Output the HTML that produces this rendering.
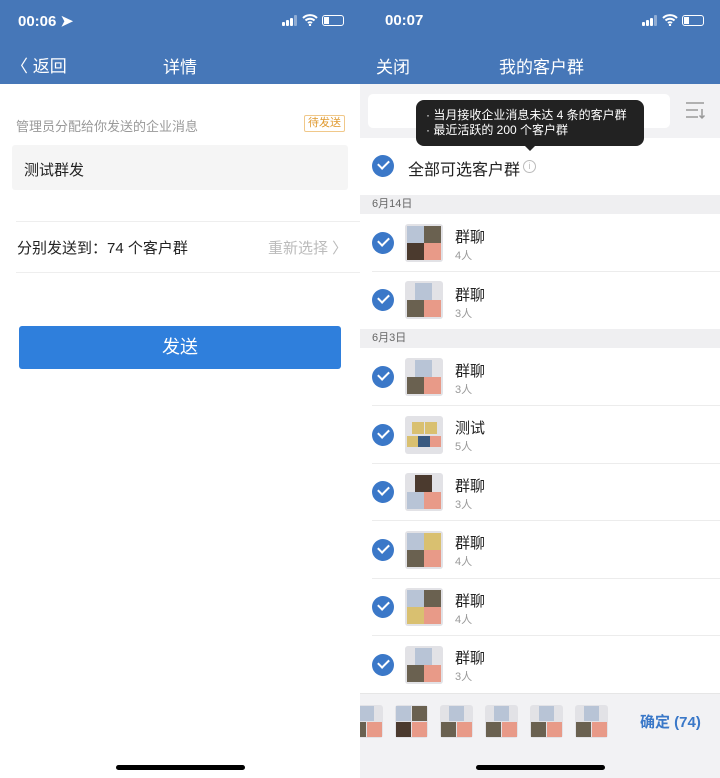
<!DOCTYPE html>
<html><head><meta charset="utf-8"><style>
*{margin:0;padding:0;box-sizing:border-box}
body{width:720px;height:778px;position:relative;overflow:hidden;background:#fff;font-family:"Liberation Sans","Noto Sans CJK SC",sans-serif}
.a{position:absolute}
.hdr{background:#4677b8;height:84px;top:0}
.st{color:#fff;font-size:15px;font-weight:bold;top:12px}
.nv{color:#fff;font-size:17px;top:53px}
.ck{position:absolute;width:22px;height:22px;border-radius:50%;background:#3b78c8;left:372px}
.ck::after{content:"";position:absolute;left:6px;top:5px;width:9px;height:5px;border-left:2px solid #fff;border-bottom:2px solid #fff;transform:rotate(-45deg)}
.av{position:absolute;left:405px;width:38px;height:38px;background:#e2e2e6;border-radius:3px}
.av i{position:absolute;width:17px;height:17px}
.nm{position:absolute;left:455px;font-size:15px;color:#222}
.ct{position:absolute;left:455px;font-size:11px;color:#999}
.ln{position:absolute;left:372px;right:0;height:1px;background:#ececec}
.sec{position:absolute;left:360px;width:360px;height:19px;background:#efeff1;font-size:11px;color:#666;padding-left:12px;line-height:19px}
.th{position:absolute;top:11px;width:33px;height:33px;background:#e2e2e6;border-radius:3px}
.th i{position:absolute;width:15px;height:15px}
.sky{background:#b8c4d6}.cat{background:#6a6150}.hor{background:#4b3a2e}.girl{background:#e89a88}.gold{background:#d9c070}.blue{background:#3a5a80}
.sig{position:absolute;top:15px;width:17px;height:11px}
.sig b{position:absolute;bottom:0;width:3px;background:#fff;border-radius:1px}
</style></head><body>
<!-- left -->
<div class="a hdr" style="left:0;width:360px"></div>
<div class="a st" style="left:18px">00:06 ➤</div>
<div class="sig" style="left:282px"><b style="left:0;height:4px"></b><b style="left:4px;height:6px"></b><b style="left:8px;height:8px"></b><b style="left:12px;height:11px;opacity:.4"></b></div>
<svg class="a" style="left:302px;top:14px" width="16" height="12" viewBox="0 0 16 12"><path d="M1 4a10 10 0 0 1 14 0M3.5 6.5a6.5 6.5 0 0 1 9 0M6 9a3 3 0 0 1 4 0" stroke="#fff" stroke-width="2" fill="none"/><circle cx="8" cy="11" r="1.2" fill="#fff"/></svg>
<div class="a" style="left:322px;top:15px;width:22px;height:11px;border:1px solid #fff;border-radius:3px"><div style="width:5px;height:7px;background:#fff;margin:1px"></div></div>
<div class="a nv" style="left:11px;top:52px">〈 返回</div>
<div class="a nv" style="left:163px">详情</div>
<div class="a" style="left:16px;top:116px;font-size:13px;color:#999">管理员分配给你发送的企业消息</div>
<div class="a" style="left:304px;top:115px;width:41px;height:17px;border:1px solid #f0c88a;border-radius:2px;color:#e09a30;font-size:11px;text-align:center;line-height:15px">待发送</div>
<div class="a" style="left:12px;top:145px;width:336px;height:45px;background:#f5f5f5;border-radius:3px;font-size:15px;color:#222;padding:14px 12px">测试群发</div>
<div class="a" style="left:16px;top:221px;width:344px;height:1px;background:#eee"></div>
<div class="a" style="left:17px;top:237px;font-size:15px;color:#222">分别发送到：74 个客户群</div>
<div class="a" style="left:268px;top:237px;font-size:15px;color:#bbb">重新选择 〉</div>
<div class="a" style="left:16px;top:272px;width:344px;height:1px;background:#eee"></div>
<div class="a" style="left:19px;top:326px;width:322px;height:43px;background:#2f7fdc;border-radius:3px;color:#fff;font-size:18px;text-align:center;line-height:43px">发送</div>
<div class="a" style="left:116px;top:765px;width:129px;height:5px;background:#000;border-radius:3px"></div>
<!-- right -->
<div class="a hdr" style="left:360px;width:360px"></div>
<div class="a st" style="left:385px">00:07</div>
<div class="sig" style="left:642px"><b style="left:0;height:4px"></b><b style="left:4px;height:6px"></b><b style="left:8px;height:8px"></b><b style="left:12px;height:11px;opacity:.4"></b></div>
<svg class="a" style="left:662px;top:14px" width="16" height="12" viewBox="0 0 16 12"><path d="M1 4a10 10 0 0 1 14 0M3.5 6.5a6.5 6.5 0 0 1 9 0M6 9a3 3 0 0 1 4 0" stroke="#fff" stroke-width="2" fill="none"/><circle cx="8" cy="11" r="1.2" fill="#fff"/></svg>
<div class="a" style="left:682px;top:15px;width:22px;height:11px;border:1px solid #fff;border-radius:3px"><div style="width:5px;height:7px;background:#fff;margin:1px"></div></div>
<div class="a nv" style="left:376px">关闭</div>
<div class="a nv" style="left:499px">我的客户群</div>
<div class="a" style="left:360px;top:84px;width:360px;height:54px;background:#f2f2f4"></div>
<div class="a" style="left:368px;top:94px;width:302px;height:34px;background:#fff;border-radius:5px"></div>
<svg class="a" style="left:685px;top:102px" width="22" height="18" viewBox="0 0 22 18"><path d="M1 1h18M1 8h12M1 15h12M17 7v9M14.5 13.5l2.5 2.5 2.5-2.5" stroke="#999" stroke-width="1.5" fill="none"/></svg>
<div class="a" style="left:416px;top:100px;width:228px;height:46px;background:#222;border-radius:8px;color:#fff;font-size:12px;line-height:15px;padding:8px 10px">· 当月接收企业消息未达 4 条的客户群<br>· 最近活跃的 200 个客户群</div>
<div class="a" style="left:524px;top:145px;width:0;height:0;border-left:6px solid transparent;border-right:6px solid transparent;border-top:6px solid #222"></div>
<div class="ck" style="top:155px"></div>
<div class="a" style="left:408px;top:156px;font-size:16px;color:#222">全部可选客户群</div>
<div class="a" style="left:523px;top:160px;width:13px;height:13px;border:1px solid #bbb;border-radius:50%;font-size:9px;color:#bbb;text-align:center;line-height:11px">i</div>
<div class="sec" style="top:195px">6月14日</div>
<div class="sec" style="top:329px">6月3日</div>

<div class="ck" style="top:232px"></div><div class="av" style="top:224px"><i class="sky" style="left:2px;top:2px"></i><i class="cat" style="left:19px;top:2px"></i><i class="hor" style="left:2px;top:19px"></i><i class="girl" style="left:19px;top:19px"></i></div><div class="nm" style="top:226px">群聊</div><div class="ct" style="top:247px">4人</div><div class="ln" style="top:271px"></div>
<div class="ck" style="top:289px"></div><div class="av" style="top:281px"><i class="sky" style="left:10px;top:2px"></i><i class="cat" style="left:2px;top:19px"></i><i class="girl" style="left:19px;top:19px"></i></div><div class="nm" style="top:284px">群聊</div><div class="ct" style="top:305px">3人</div>

<div class="ck" style="top:366px"></div><div class="av" style="top:358px"><i class="sky" style="left:10px;top:2px"></i><i class="cat" style="left:2px;top:19px"></i><i class="girl" style="left:19px;top:19px"></i></div><div class="nm" style="top:360px">群聊</div><div class="ct" style="top:381px">3人</div><div class="ln" style="top:405px"></div>
<div class="ck" style="top:424px"></div><div class="av" style="top:416px"><i class="gold" style="left:7px;top:6px;width:12px;height:12px"></i><i class="gold" style="left:20px;top:6px;width:12px;height:12px"></i><i class="gold" style="left:2px;top:20px;width:11px;height:11px"></i><i class="blue" style="left:13px;top:20px;width:12px;height:11px"></i><i class="girl" style="left:25px;top:20px;width:11px;height:11px"></i></div><div class="nm" style="top:417px">测试</div><div class="ct" style="top:438px">5人</div><div class="ln" style="top:463px"></div>
<div class="ck" style="top:481px"></div><div class="av" style="top:473px"><i class="hor" style="left:10px;top:2px"></i><i class="sky" style="left:2px;top:19px"></i><i class="girl" style="left:19px;top:19px"></i></div><div class="nm" style="top:475px">群聊</div><div class="ct" style="top:496px">3人</div><div class="ln" style="top:520px"></div>
<div class="ck" style="top:539px"></div><div class="av" style="top:531px"><i class="sky" style="left:2px;top:2px"></i><i class="gold" style="left:19px;top:2px"></i><i class="cat" style="left:2px;top:19px"></i><i class="girl" style="left:19px;top:19px"></i></div><div class="nm" style="top:532px">群聊</div><div class="ct" style="top:553px">4人</div><div class="ln" style="top:578px"></div>
<div class="ck" style="top:596px"></div><div class="av" style="top:588px"><i class="sky" style="left:2px;top:2px"></i><i class="cat" style="left:19px;top:2px"></i><i class="gold" style="left:2px;top:19px"></i><i class="girl" style="left:19px;top:19px"></i></div><div class="nm" style="top:590px">群聊</div><div class="ct" style="top:611px">4人</div><div class="ln" style="top:635px"></div>
<div class="ck" style="top:654px"></div><div class="av" style="top:646px"><i class="sky" style="left:10px;top:2px"></i><i class="cat" style="left:2px;top:19px"></i><i class="girl" style="left:19px;top:19px"></i></div><div class="nm" style="top:647px">群聊</div><div class="ct" style="top:668px">3人</div>

<div class="a" style="left:360px;top:693px;width:360px;height:85px;background:#f2f2f4;border-top:1px solid #e6e6e6;overflow:hidden">
<div class="th" style="left:-10px"><i class="sky" style="left:9px;top:1px"></i><i class="cat" style="left:1px;top:17px"></i><i class="girl" style="left:17px;top:17px"></i></div>
<div class="th" style="left:35px"><i class="sky" style="left:1px;top:1px"></i><i class="cat" style="left:17px;top:1px"></i><i class="hor" style="left:1px;top:17px"></i><i class="girl" style="left:17px;top:17px"></i></div>
<div class="th" style="left:80px"><i class="sky" style="left:9px;top:1px"></i><i class="cat" style="left:1px;top:17px"></i><i class="girl" style="left:17px;top:17px"></i></div>
<div class="th" style="left:125px"><i class="sky" style="left:9px;top:1px"></i><i class="cat" style="left:1px;top:17px"></i><i class="girl" style="left:17px;top:17px"></i></div>
<div class="th" style="left:170px"><i class="sky" style="left:9px;top:1px"></i><i class="cat" style="left:1px;top:17px"></i><i class="girl" style="left:17px;top:17px"></i></div>
<div class="th" style="left:215px"><i class="sky" style="left:9px;top:1px"></i><i class="cat" style="left:1px;top:17px"></i><i class="girl" style="left:17px;top:17px"></i></div>
</div>
<div class="a" style="left:640px;top:711px;font-size:15px;color:#3a78c8;font-weight:bold">确定 (74)</div>
<div class="a" style="left:476px;top:765px;width:129px;height:5px;background:#000;border-radius:3px"></div>
</body></html>
